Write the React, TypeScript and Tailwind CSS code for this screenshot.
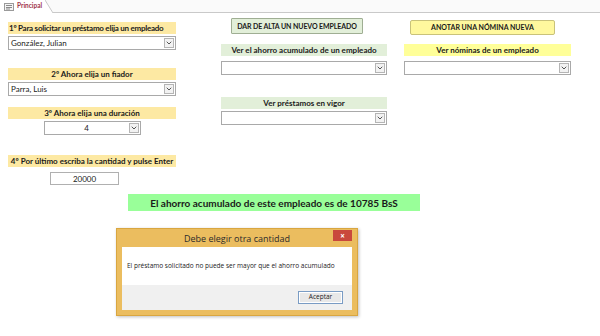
import { ChevronDown } from "lucide-react";

function Combo({ value = "", className = "" }: { value?: string; className?: string }) {
  return (
    <div className={`flex h-[14px] items-center border border-[#a9a9a9] bg-white ${className}`}>
      <span className="flex-1 truncate px-[2px] text-center text-[8px] leading-none text-[#222]">{value}</span>
      <span className="mr-[1px] flex h-[10px] w-[10px] items-center justify-center border border-[#b5b5b5] bg-[#f2f2f2]">
        <ChevronDown className="h-[8px] w-[8px] text-[#555]" strokeWidth={3} />
      </span>
    </div>
  );
}

function LeftCombo({ value }: { value: string }) {
  return (
    <div className="flex h-[14px] items-center border border-[#a9a9a9] bg-white">
      <span className="flex-1 truncate pl-[2px] text-[8px] leading-none text-[#222]">{value}</span>
      <span className="mr-[1px] flex h-[10px] w-[10px] items-center justify-center border border-[#b5b5b5] bg-[#f2f2f2]">
        <ChevronDown className="h-[8px] w-[8px] text-[#555]" strokeWidth={3} />
      </span>
    </div>
  );
}

function Label({ text, color, left = false }: { text: string; color: string; left?: boolean }) {
  return (
    <div
      className={`flex h-[12px] items-center overflow-hidden whitespace-nowrap px-[1px] text-[8px] font-bold leading-none text-[#1a1a1a] ${color} ${
        left ? "justify-start tracking-[-0.25px]" : "justify-center"
      }`}
    >
      {text}
    </div>
  );
}

export default function App() {
  return (
    <div
      className="h-[336px] w-[600px] overflow-hidden bg-white"
      style={{ fontFamily: "Lato, 'Open Sans', sans-serif" }}
    >
      {/* tab strip */}
      <div className="relative h-[13px] border-b border-[#c9c9c9] bg-[#fafafa]">
        <div className="absolute left-0 top-0 flex h-[13px] w-[46px] items-center gap-[3px] bg-white pl-[4px]">
          <svg width="10" height="8" viewBox="0 0 10 8">
            <rect x="0.5" y="0.5" width="9" height="7" fill="#f4f4f4" stroke="#9a9a9a" />
            <line x1="2" y1="2.5" x2="8" y2="2.5" stroke="#8a8a8a" />
            <line x1="2" y1="4.5" x2="8" y2="4.5" stroke="#8a8a8a" />
            <line x1="2" y1="6" x2="6" y2="6" stroke="#8a8a8a" />
          </svg>
          <span className="text-[6.5px] font-bold leading-none text-[#a0344a]">Principal</span>
        </div>
        <svg className="absolute left-[45px] top-0" width="9" height="14" viewBox="0 0 9 14">
          <path d="M0 0 L8 13 L0 13 Z" fill="#fff" />
          <path d="M0 0 L8 13" stroke="#c9c9c9" fill="none" />
        </svg>
      </div>

      <div className="flex">
        {/* left column */}
        <div className="ml-[8px] mt-[9px] flex w-[168px] flex-col">
          <Label text="1º Para solicitar un préstamo elija un empleado" color="bg-[#fde9a3]" left />
          <div className="mt-[2px]">
            <LeftCombo value="González, Julian" />
          </div>
          <div className="mt-[18px]">
            <Label text="2º Ahora elija un fiador" color="bg-[#fde9a3]" />
          </div>
          <div className="mt-[2px]">
            <LeftCombo value="Parra, Luis" />
          </div>
          <div className="mt-[11px]">
            <Label text="3º Ahora elija una duración" color="bg-[#fde9a3]" />
          </div>
          <div className="mt-[2px] flex justify-center">
            <Combo value="4" className="w-[97px]" />
          </div>
          <div className="mt-[20px]">
            <Label text="4º Por último escriba la cantidad y pulse Enter" color="bg-[#fde9a3]" />
          </div>
          <div className="ml-[42px] mt-[5px] flex h-[13px] w-[69px] items-center justify-center border border-[#b0b0b0] bg-white text-[8px] leading-none text-[#222]">
            20000
          </div>
        </div>

        {/* middle column */}
        <div className="ml-[45px] mt-[5px] flex w-[166px] flex-col">
          <div className="ml-[10px] flex h-[16px] w-[132px] items-center justify-center whitespace-nowrap rounded-[1px] border border-[#9fae93] bg-[#e2efd9] text-[7px] font-bold leading-none tracking-[-0.1px] text-[#1a1a1a]">
            DAR DE ALTA UN NUEVO EMPLEADO
          </div>
          <div className="mt-[10px]">
            <Label text="Ver el ahorro acumulado de un empleado" color="bg-[#e2efd9]" />
          </div>
          <div className="mt-[5px]">
            <Combo />
          </div>
          <div className="mt-[22px]">
            <Label text="Ver préstamos en vigor" color="bg-[#e2efd9]" />
          </div>
          <div className="mt-[2px]">
            <Combo />
          </div>
        </div>

        {/* right column */}
        <div className="ml-[17px] mt-[7px] flex w-[167px] flex-col">
          <div className="ml-[6px] flex h-[15px] w-[145px] items-center justify-center whitespace-nowrap rounded-[2px] border border-[#c9c27a] bg-[#fff89e] text-[7px] font-bold leading-none text-[#1a1a1a]">
            ANOTAR UNA NÓMINA NUEVA
          </div>
          <div className="mt-[9px]">
            <Label text="Ver nóminas de un empleado" color="bg-[#ffff99]" />
          </div>
          <div className="mt-[5px]">
            <Combo />
          </div>
        </div>
      </div>

      {/* banner */}
      <div className="ml-[128px] mt-[9px] flex h-[17px] w-[292px] items-center justify-center whitespace-nowrap bg-[#99ff99] text-[10px] font-bold leading-none text-[#1a1a1a]">
        El ahorro acumulado de este empleado es de 10785 BsS
      </div>

      {/* dialog */}
      <div
        className="ml-[116px] mt-[17px] flex w-[242px] flex-col border border-[#d9a640] bg-[#ebbd5f] px-[5px] pb-[5px] shadow-[1px_1px_3px_rgba(0,0,0,0.25)]"
        style={{ fontFamily: "'Open Sans', 'Noto Sans', sans-serif" }}
      >
        <div className="relative flex h-[18px] items-center justify-center text-[9px] leading-none text-[#2b2b2b]">
          Debe elegir otra cantidad
          <div className="absolute right-[0px] top-[1px] flex h-[11px] w-[19px] items-center justify-center bg-[#c9483c] text-[8px] font-bold leading-none text-white">
            ×
          </div>
        </div>
        <div className="flex h-[38px] items-center bg-white pl-[5px] text-[6.5px] leading-none text-[#222]">
          El préstamo solicitado no puede ser mayor que el ahorro acumulado
        </div>
        <div className="flex h-[25px] items-center justify-end bg-[#f0f0f0] pr-[9px]">
          <div className="flex h-[13px] w-[45px] items-center justify-center border border-[#7a9cc4] bg-[#e8e8e8] text-[6.5px] leading-none text-[#222] shadow-[inset_0_0_0_1px_#ffffff]">
            Aceptar
          </div>
        </div>
      </div>
    </div>
  );
}
